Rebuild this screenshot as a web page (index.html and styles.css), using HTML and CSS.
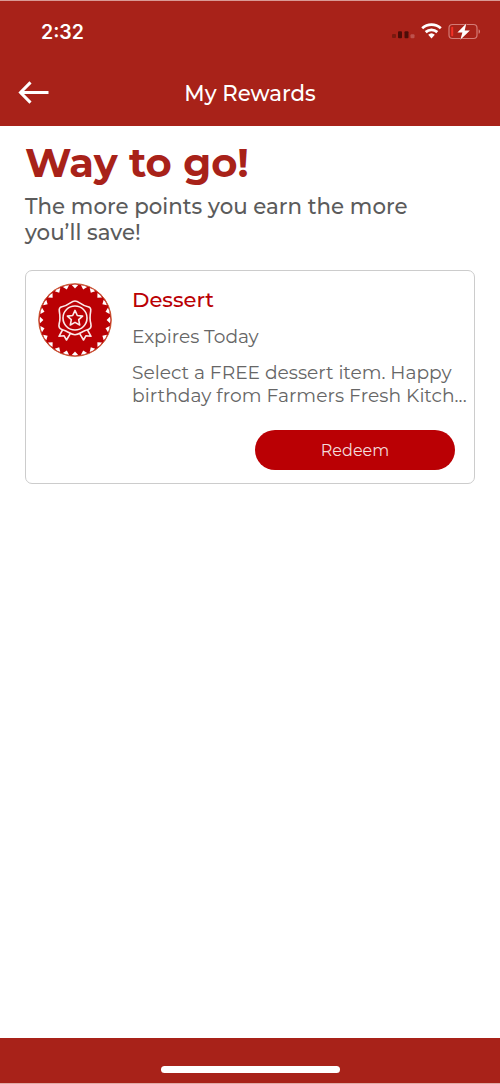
FILE: index.html
```html
<!DOCTYPE html>
<html lang="en">
<head>
<meta charset="utf-8">
<title>My Rewards</title>
<link rel="stylesheet" href="styles.css">
</head>
<body>
<div class="screen">
  <header class="header">
    <div class="status">
      <span class="time">2:32</span>
      <svg class="status-icons" width="92" height="20" viewBox="0 0 92 20">
        <rect x="4" y="13" width="4" height="4" rx="1" fill="#78190f"/>
        <rect x="10" y="10.300" width="4" height="7" rx="1" fill="#4c0d08"/>
        <rect x="16.500" y="10.300" width="4" height="7" rx="1" fill="#4c0d08"/>
        <rect x="22.500" y="13.300" width="4" height="4" rx="1" fill="#bd524c"/>
        <path d="M34.200 7.200a14 14 0 0 1 18.600 0M37.700 11.100a8.600 8.600 0 0 1 11.600 0" fill="none" stroke="#fff" stroke-width="2.800"/>
        <path d="M43.500 17.400l-3.300-3.600a4.800 4.800 0 0 1 6.600 0z" fill="#fff"/>
        <rect x="61" y="3.500" width="28" height="14" rx="3.500" fill="none" stroke="#d47b76" stroke-width="1.200"/>
        <path d="M90.600 8.200v4.600c1.900-.8 1.900-3.800 0-4.600z" fill="#d47b76"/>
        <rect x="63.200" y="5.800" width="2" height="9.400" rx="1" fill="#f33025"/>
        <path d="M78.300 2.500l-8.900 9h5l-2.100 7.300 9.600-9.200h-5.200z" fill="#fff" stroke="#a82219" stroke-width="1" paint-order="stroke"/>
      </svg>
    </div>
    <div class="nav">
      <svg class="back" width="32" height="26" viewBox="0 0 32 26"><path d="M30.500 12.500H3M12.500 2.400L2.500 12.500l10 10.100" fill="none" stroke="#fff" stroke-width="3"/></svg>
      <h1 class="title">My Rewards</h1>
    </div>
  </header>
  <main class="content">
    <h2 class="headline">Way to go!</h2>
    <p class="intro">The more points you earn the more<br>you’ll save!</p>
    <section class="card">
      <svg class="badge" width="74" height="74" viewBox="-37 -37 74 74">
        <defs>
          <path id="tooth" d="M-3.200-35Q0-35.900 3.200-35L0-31.600z"/>
          <g id="quarter"><use href="#tooth"/><use href="#tooth" transform="rotate(15)"/><use href="#tooth" transform="rotate(30)"/><use href="#tooth" transform="rotate(45)"/><use href="#tooth" transform="rotate(60)"/><use href="#tooth" transform="rotate(75)"/></g>
        </defs>
        <circle r="36.300" fill="#ba0004" stroke="#c9562f" stroke-width="1"/>
        <g fill="#fff"><use href="#quarter"/><use href="#quarter" transform="rotate(90)"/><use href="#quarter" transform="rotate(180)"/><use href="#quarter" transform="rotate(270)"/></g>
        <g fill="none" stroke="#fbe9e9" stroke-width="1.600" stroke-linejoin="round" stroke-linecap="round">
          <path d="M0-19C4-19 6-14.500 13-13.200C15.500-12.700 16-11 15.700-9C15-5 14.500-1 15.800 3.500C16.800 7.500 15.500 9 12.500 9.800C7 11 4.500 14.700 0 14.700S-7 11-12.500 9.800C-15.500 9-16.800 7.500-15.800 3.500C-14.500-1-15-5-15.700-9C-16-11-15.500-12.700-13-13.200C-6-14.500-4-19 0-19z"/>
          <circle cy="-2" r="12"/>
          <path d="M0-9.600L2.300-4.500L7.600-3.900L3.700-.3L4.700 5L0 2.400L-4.700 5L-3.700-.3L-7.600-3.900L-2.300-4.500z"/>
          <path d="M-12.500 10L-16 16.300L-11 15.700L-8.500 20L-4.700 13.700M12.500 10L16 16.300L11 15.700L8.500 20L4.700 13.700"/>
        </g>
      </svg>
      <div class="details">
        <h3 class="name">Dessert</h3>
        <p class="expiry">Expires Today</p>
        <p class="desc">Select a FREE dessert item. Happy<br><span class="desc-last">birthday from Farmers Fresh Kitch...</span></p>
        <button class="redeem">Redeem</button>
      </div>
    </section>
  </main>
  <footer class="footer"><div class="home-bar"></div></footer>
</div>
</body>
</html>
```
FILE: styles.css
```css
* { box-sizing: border-box; margin: 0; padding: 0; }
body { font-family: Montserrat, Inter, sans-serif; color: #5b5b5b; background: #fff; }
.screen { width: 500px; height: 1084px; display: flex; flex-direction: column; overflow: hidden; }
.header { height: 126px; background: #a82219; border-top: 1px solid #d99a95; color: #fff; }
.status { height: 59px; display: flex; justify-content: space-between; padding: 20px 20px 0 41px; }
.time { font: 600 19.500px/22px Inter, sans-serif; }
.status-icons { display: block; }
.nav { height: 66px; display: grid; grid-template-columns: 32px 1fr 32px; align-items: center; padding: 0 18px; }
.title { font-size: 21.300px; font-weight: 500; line-height: 28px; text-align: center; white-space: nowrap; }
.content { flex: 1; padding: 12px 25px 0; white-space: nowrap; }
.headline { font-size: 40px; line-height: 50px; font-weight: 700; color: #a82219; }
.intro { font-size: 21.330px; line-height: 26px; font-weight: 500; padding-top: 5px; }
.card { height: 214px; margin-top: 25px; border: 1px solid #ccc; border-radius: 7px; display: flex; padding: 12px 0 0 12px; }
.badge { flex: none; display: block; }
.details { flex: 1; min-width: 0; display: flex; flex-direction: column; padding-left: 20px; }
.name { color: #ba0004; font-size: 21.100px; line-height: 26px; font-weight: 500; padding-top: 4px; }
.expiry { font-size: 18.600px; line-height: 24px; margin-top: 12px; font-weight: 400; color: #666; }
.desc { font-size: 18.640px; line-height: 23px; margin-top: 12px; font-weight: 400; color: #666; }
.desc-last { letter-spacing: .06px; }
.redeem { align-self: flex-end; width: 200px; height: 40px; margin: 23px 19px 0 0; padding-top: 2px; border: 0; border-radius: 20px; background: #ba0004; color: #f3dcdc; font-family: inherit; font-size: 16px; line-height: 38px; }
.footer { height: 46px; background: #a82219; border-bottom: 1px solid #e0aaa6; display: flex; justify-content: center; padding-top: 28px; }
.home-bar { width: 179px; height: 7px; border-radius: 4px; background: #fff; }
```
